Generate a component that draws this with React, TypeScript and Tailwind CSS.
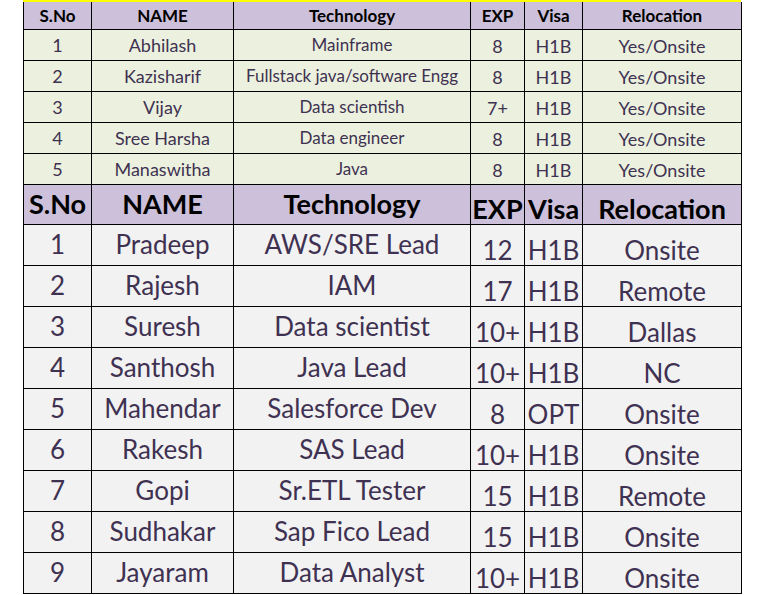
import React from "react";

const top = [
  ["1", "Abhilash", "Mainframe", "8", "H1B", "Yes/Onsite"],
  ["2", "Kazisharif", "Fullstack java/software Engg", "8", "H1B", "Yes/Onsite"],
  ["3", "Vijay", "Data scientish", "7+", "H1B", "Yes/Onsite"],
  ["4", "Sree Harsha", "Data engineer", "8", "H1B", "Yes/Onsite"],
  ["5", "Manaswitha", "Java", "8", "H1B", "Yes/Onsite"],
];

const bottom = [
  ["1", "Pradeep", "AWS/SRE Lead", "12", "H1B", "Onsite"],
  ["2", "Rajesh", "IAM", "17", "H1B", "Remote"],
  ["3", "Suresh", "Data scientist", "10+", "H1B", "Dallas"],
  ["4", "Santhosh", "Java Lead", "10+", "H1B", "NC"],
  ["5", "Mahendar", "Salesforce Dev", "8", "OPT", "Onsite"],
  ["6", "Rakesh", "SAS Lead", "10+", "H1B", "Onsite"],
  ["7", "Gopi", "Sr.ETL Tester", "15", "H1B", "Remote"],
  ["8", "Sudhakar", "Sap Fico Lead", "15", "H1B", "Onsite"],
  ["9", "Jayaram", "Data Analyst", "10+", "H1B", "Onsite"],
];

const heads = ["S.No", "NAME", "Technology", "EXP", "Visa", "Relocation"];

function Cols() {
  return (
    <colgroup>
      <col className="w-[68px]" />
      <col className="w-[142px]" />
      <col className="w-[237px]" />
      <col className="w-[54px]" />
      <col className="w-[58px]" />
      <col className="w-[159px]" />
    </colgroup>
  );
}

export default function App() {
  return (
    <div className="w-[762px] h-[595px] bg-white overflow-hidden" style={{ fontFamily: "Lato, 'Open Sans', sans-serif" }}>
      <div className="ml-[23px] w-[718px] border-t-2 border-[#ffff00]">
        <table className="table-fixed border-collapse w-[718px]">
          <Cols />
          <thead>
            <tr className="h-[27px] bg-[#ccc0da]">
              {heads.map((h) => (
                <th key={h} className="border border-black border-t-0 p-0 text-center align-middle text-[17px] font-bold text-black leading-none whitespace-nowrap">
                  {h}
                </th>
              ))}
            </tr>
          </thead>
          <tbody>
            {top.map((r, i) => (
              <tr key={i} className="h-[31px] bg-[#ebf1de]">
                {r.map((c, j) => (
                  <td
                    key={j}
                    className={`border border-black p-0 text-center align-middle leading-none text-[#3f3151] whitespace-nowrap ${j === 2 ? "text-[17px]" : "text-[18px]"} ${j >= 3 ? "pt-[3px]" : ""}`}
                  >
                    {c}
                  </td>
                ))}
              </tr>
            ))}
          </tbody>
        </table>
        <table className="table-fixed border-collapse w-[718px]">
          <Cols />
          <thead>
            <tr className="h-[40px] bg-[#ccc0da]">
              {heads.map((h, j) => (
                <th
                  key={h}
                  className={`border border-black border-t-0 p-0 text-center align-middle text-[27px] font-bold text-black leading-none whitespace-nowrap ${j >= 3 ? "pt-[8px]" : "pb-[2px]"}`}
                >
                  {h}
                </th>
              ))}
            </tr>
          </thead>
          <tbody>
            {bottom.map((r, i) => (
              <tr key={i} className="h-[41px] bg-[#f2f2f2]">
                {r.map((c, j) => (
                  <td
                    key={j}
                    className={`border border-black p-0 text-center align-middle text-[26px] leading-none text-[#3f3151] whitespace-nowrap ${j >= 3 ? "pt-[10px]" : "pb-[2px]"}`}
                  >
                    {c}
                  </td>
                ))}
              </tr>
            ))}
          </tbody>
        </table>
      </div>
    </div>
  );
}
